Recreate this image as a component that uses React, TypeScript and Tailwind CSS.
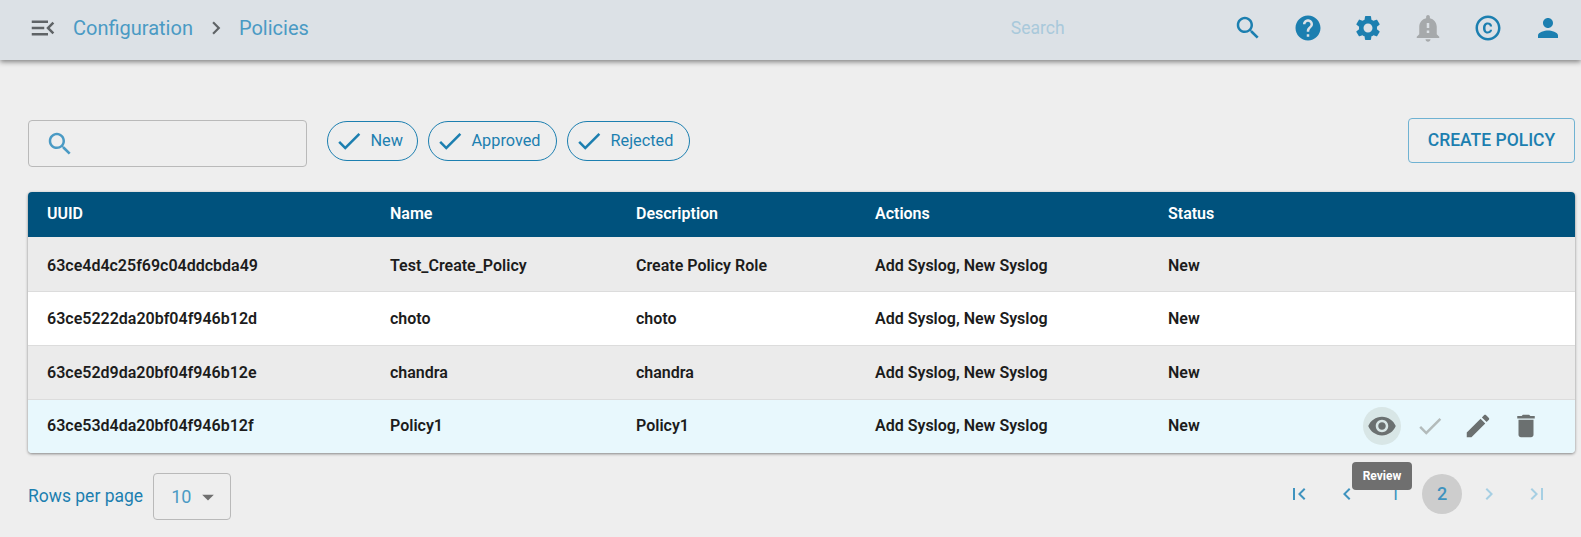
import React from 'react';

const ICONS = {
  menuOpen: 'M3 18h13v-2H3v2zm0-5h10v-2H3v2zm0-7v2h13V6H3zm18 9.59L17.42 12 21 8.41 19.59 7l-5 5 5 5L21 15.59z',
  search: 'M15.5 14h-.79l-.28-.27C15.41 12.59 16 11.11 16 9.5 16 5.91 13.09 3 9.5 3S3 5.91 3 9.5 5.91 16 9.5 16c1.61 0 3.09-.59 4.23-1.57l.27.28v.79l5 4.99L20.49 19l-4.99-5zm-6 0C7.01 14 5 11.99 5 9.5S7.01 5 9.5 5 14 7.01 14 9.5 11.99 14 9.5 14z',
  help: 'M12 2C6.48 2 2 6.48 2 12s4.48 10 10 10 10-4.48 10-10S17.52 2 12 2zm1 17h-2v-2h2v2zm2.07-7.75l-.9.92C13.45 12.9 13 13.5 13 15h-2v-.5c0-1.1.45-2.1 1.17-2.83l1.24-1.26c.37-.36.59-.86.59-1.41 0-1.1-.9-2-2-2s-2 .9-2 2H8c0-2.21 1.79-4 4-4s4 1.79 4 4c0 .88-.36 1.68-.93 2.25z',
  settings: 'M19.14 12.94c.04-.3.06-.61.06-.94 0-.32-.02-.64-.07-.94l2.03-1.58c.18-.14.23-.41.12-.61l-1.92-3.32c-.12-.22-.37-.29-.59-.22l-2.39.96c-.5-.38-1.03-.7-1.62-.94l-.36-2.54c-.04-.24-.24-.41-.48-.41h-3.84c-.24 0-.43.17-.47.41l-.36 2.54c-.59.24-1.13.57-1.62.94l-2.39-.96c-.22-.08-.47 0-.59.22L2.74 8.87c-.12.21-.08.47.12.61l2.03 1.58c-.05.3-.09.63-.09.94s.02.64.07.94l-2.03 1.58c-.18.14-.23.41-.12.61l1.92 3.32c.12.22.37.29.59.22l2.39-.96c.5.38 1.03.7 1.62.94l.36 2.54c.05.24.24.41.48.41h3.84c.24 0 .44-.17.47-.41l.36-2.54c.59-.24 1.13-.56 1.62-.94l2.39.96c.22.08.47 0 .59-.22l1.92-3.32c.12-.22.07-.47-.12-.61l-2.01-1.58zM12 15.6c-1.98 0-3.6-1.62-3.6-3.6s1.62-3.6 3.6-3.6 3.6 1.62 3.6 3.6-1.62 3.6-3.6 3.6z',
  bell: 'M12 23c1.1 0 1.99-.89 1.99-1.99h-3.98c0 1.1.89 1.99 1.99 1.99zm7-6v-6c0-3.35-2.36-6.15-5.5-6.83V3c0-.83-.67-1.5-1.5-1.5s-1.5.67-1.5 1.5v1.17C7.36 4.85 5 7.65 5 11v6l-2 2v1h18v-1l-2-2zm-6-1h-2v-2h2v2zm0-4h-2V8h2v4z',
  copyright: 'M11.88 9.14c1.28.06 1.61 1.15 1.63 1.66h1.79c-.08-1.98-1.49-3.19-3.45-3.19C9.64 7.61 8 9 8 12.14c0 1.94.93 4.24 3.84 4.24 2.22 0 3.41-1.65 3.44-2.95h-1.79c-.03.59-.45 1.38-1.63 1.44-1.31-.04-1.86-1.06-1.86-2.73 0-2.89 1.28-2.98 1.88-3zM12 2C6.48 2 2 6.48 2 12s4.48 10 10 10 10-4.48 10-10S17.52 2 12 2zm0 18c-4.41 0-8-3.59-8-8s3.59-8 8-8 8 3.59 8 8-3.59 8-8 8z',
  person: 'M12 12c2.21 0 4-1.79 4-4s-1.79-4-4-4-4 1.79-4 4 1.79 4 4 4zm0 2c-2.67 0-8 1.34-8 4v2h16v-2c0-2.66-5.33-4-8-4z',
  done: 'M9 16.17L4.83 12l-1.42 1.41L9 19 21 7l-1.41-1.41z',
  eye: 'M12 4.5C7 4.5 2.73 7.61 1 12c1.73 4.39 6 7.5 11 7.5s9.27-3.11 11-7.5c-1.73-4.39-6-7.5-11-7.5zM12 17c-2.76 0-5-2.24-5-5s2.24-5 5-5 5 2.24 5 5-2.24 5-5 5zm0-8c-1.66 0-3 1.34-3 3s1.34 3 3 3 3-1.34 3-3-1.34-3-3-3z',
  edit: 'M3 17.25V21h3.75L17.81 9.94l-3.75-3.75L3 17.25zM20.71 7.04c.39-.39.39-1.02 0-1.41l-2.34-2.34c-.39-.39-1.02-.39-1.41 0l-1.83 1.83 3.75 3.75 1.83-1.83z',
  trash: 'M6 19c0 1.1.9 2 2 2h8c1.1 0 2-.9 2-2V7H6v12zM19 4h-3.5l-1-1h-5l-1 1H5v2h14V4z',
  first: 'M18.41 16.59L13.82 12l4.59-4.59L17 6l-6 6 6 6zM6 6h2v12H6z',
  prev: 'M15.41 7.41L14 6l-6 6 6 6 1.41-1.41L10.83 12z',
  next: 'M10 6L8.59 7.41 13.17 12l-4.58 4.59L10 18l6-6z',
  last: 'M5.59 7.41L10.18 12l-4.59 4.59L7 18l6-6-6-6zM16 6h2v12h-2z',
  dropDown: 'M7 10l5 5 5-5z',
};

const Icon: React.FC<{ d: string; className?: string }> = ({ d, className }) => (
  <svg viewBox="0 0 24 24" fill="currentColor" className={`shrink-0 ${className ?? 'w-[30px] h-[30px]'}`}>
    <path d={d} />
  </svg>
);

const rows = [
  { uuid: '63ce4d4c25f69c04ddcbda49', name: 'Test_Create_Policy', desc: 'Create Policy Role', bg: 'bg-[#ebebeb]', height: 'h-[55px] pt-[3px]' },
  { uuid: '63ce5222da20bf04f946b12d', name: 'choto', desc: 'choto', bg: 'bg-white', height: 'h-[54px] pt-[1px]' },
  { uuid: '63ce52d9da20bf04f946b12e', name: 'chandra', desc: 'chandra', bg: 'bg-[#ebebeb]', height: 'h-[54px]' },
  { uuid: '63ce53d4da20bf04f946b12f', name: 'Policy1', desc: 'Policy1', bg: 'bg-[#e8f8fd] rounded-b', height: 'h-[53px] pb-[1px]', hovered: true },
];

const gridCols = 'grid grid-cols-[343px_246px_239px_293px_1fr] items-center pl-[19px]';

const Chip: React.FC<{ label: string; width: string }> = ({ label, width }) => (
  <div className={`flex items-center h-[40px] pl-[6px] rounded-full border border-[#1c7fb0] text-[#1c7fb0] ${width}`}>
    <Icon d={ICONS.done} />
    <span className="ml-[6.5px] text-[16.3px]">{label}</span>
  </div>
);

const App: React.FC = () => {
  return (
    <div className="w-[1581px] h-[537px] overflow-hidden bg-[#eeeeee] font-['Roboto',sans-serif]">
      <header className="relative z-10 h-[60px] pb-[4px] flex items-center bg-[#dce1e6] shadow-[0_2px_5px_rgba(0,0,0,0.45)]">
        <div className="ml-[28px] text-[#5f6366]">
          <Icon d={ICONS.menuOpen} />
        </div>
        <span className="ml-[15px] text-[20px] text-[#4a9ac4]">Configuration</span>
        <Icon d={ICONS.next} className="ml-[10px] w-[26px] h-[26px] text-[#5f6366]" />
        <span className="ml-[10px] text-[20px] text-[#4a9ac4]">Policies</span>
        <span className="ml-[702px] w-[54px] text-[17.5px] text-[#a9c9db]">Search</span>
        <div className="ml-[168px] flex items-center gap-[30px] text-[#1c7fb0]">
          <Icon d={ICONS.search} />
          <Icon d={ICONS.help} />
          <Icon d={ICONS.settings} />
          <Icon d={ICONS.bell} className="w-[30px] h-[30px] text-[#a6a9ab]" />
          <Icon d={ICONS.copyright} />
          <Icon d={ICONS.person} />
        </div>
      </header>

      <main className="pl-[28px] pr-[6px]">
        <div className="mt-[58px] flex items-start h-[46px]">
          <div className="mt-[2px] flex items-center w-[279px] h-[47px] pl-[16px] rounded border border-[#b9b9b9] text-[#4a9ac4]">
            <Icon d={ICONS.search} />
          </div>
          <div className="mt-[3px] ml-[20px] flex items-center gap-[10px]">
            <Chip label="New" width="w-[91px]" />
            <Chip label="Approved" width="w-[129px]" />
            <Chip label="Rejected" width="w-[123px]" />
          </div>
          <button className="ml-auto w-[167px] h-[45px] rounded border border-[#6fb2d2] text-[17.5px] font-medium text-[#1c7fb0]">
            CREATE POLICY
          </button>
        </div>

        <div className="mt-[28px] rounded shadow-[0_1px_3px_rgba(0,0,0,0.45)]">
          <div className={`${gridCols} h-[45px] pb-[2px] rounded-t bg-[#00527d] text-[16px] font-semibold text-white`}>
            <div>UUID</div>
            <div>Name</div>
            <div>Description</div>
            <div>Actions</div>
            <div>Status</div>
          </div>
          {rows.map(row => (
            <div key={row.uuid} className={`${gridCols} ${row.height} border-b border-[#dcdcdc] last:border-b-0 text-[16px] font-semibold text-[#1c1c1c] ${row.bg}`}>
              <div>{row.uuid}</div>
              <div>{row.name}</div>
              <div>{row.desc}</div>
              <div>Add Syslog, New Syslog</div>
              <div className="flex items-center justify-between">
                <span>New</span>
                {row.hovered && (
                  <div className="flex items-center gap-[18px] mr-[34px] text-[#6b7070]">
                    <div className="relative flex items-center justify-center w-[30px] h-[30px]">
                      <div className="absolute left-[-4px] top-[-4px] w-[38px] h-[38px] rounded-full bg-[#d8e6e6]" />
                      <Icon d={ICONS.eye} className="relative w-[30px] h-[30px]" />
                      <div className="absolute z-20 left-[-15px] top-[51px] w-[60px] h-[28px] flex items-center justify-center rounded bg-[#6f6f6f] text-[12px] font-bold text-white">
                        Review
                      </div>
                    </div>
                    <Icon d={ICONS.done} className="w-[30px] h-[30px] text-[#b3bbbb]" />
                    <Icon d={ICONS.edit} />
                    <Icon d={ICONS.trash} />
                  </div>
                )}
              </div>
            </div>
          ))}
        </div>

        <div className="mt-[20px] flex items-center h-[47px]">
          <span className="text-[17.5px] text-[#1c7fb0]">Rows per page</span>
          <div className="ml-[10px] flex items-center w-[78px] h-[47px] pl-[17px] rounded border border-[#b9b9b9]">
            <span className="text-[18px] text-[#4a9ac4]">10</span>
            <Icon d={ICONS.dropDown} className="ml-[3px] w-[28px] h-[28px] text-[#6f6f6f]" />
          </div>
          <div className="ml-auto mr-[26px] -mt-[6px] flex items-center gap-[24px] text-[#3f93bf]">
            <Icon d={ICONS.first} className="w-[24px] h-[24px]" />
            <Icon d={ICONS.prev} className="w-[24px] h-[24px]" />
            <span className="w-[24px] text-center text-[18px]">1</span>
            <div className="-mx-[9px] flex items-center justify-center w-[40px] h-[40px] rounded-full bg-[#cdcdcd] text-[18px] font-medium">2</div>
            <Icon d={ICONS.next} className="w-[24px] h-[24px] text-[#a6cfe3]" />
            <Icon d={ICONS.last} className="w-[24px] h-[24px] text-[#a6cfe3]" />
          </div>
        </div>
      </main>
    </div>
  );
};

export default App;
